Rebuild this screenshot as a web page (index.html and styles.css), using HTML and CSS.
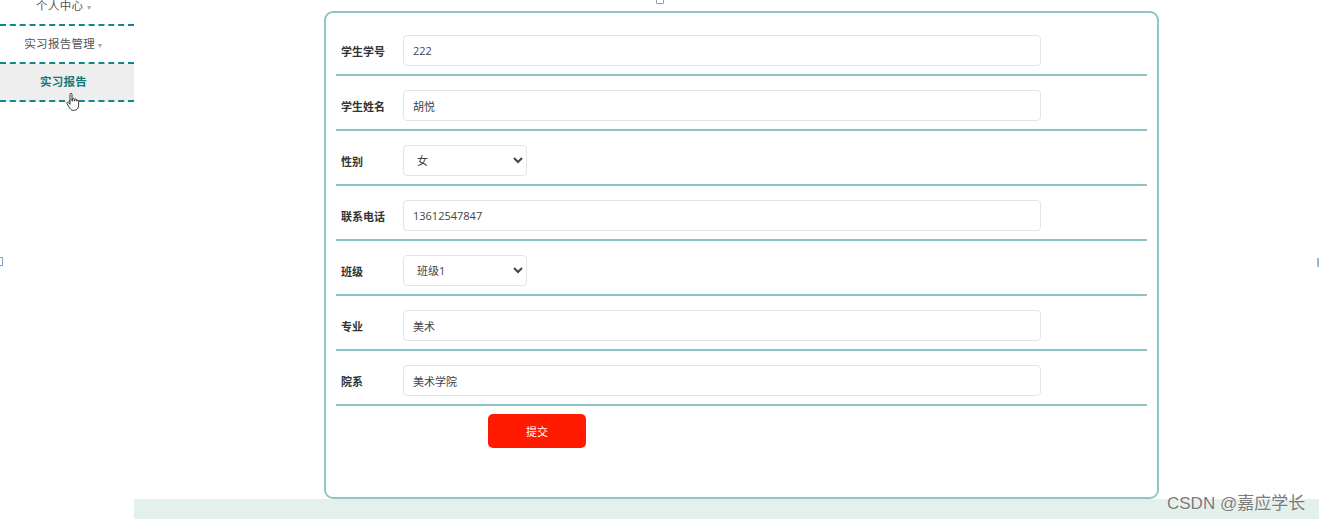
FILE: index.html
```html
<!DOCTYPE html>
<html lang="zh-CN">
<head>
<meta charset="utf-8">
<title>实习报告</title>
<link rel="stylesheet" href="styles.css">
</head>
<body>
<div class="page">
  <aside class="sidebar">
    <ul class="menu">
      <li class="menu-item">个人中心 <span class="caret">▾</span></li>
      <li class="menu-item">实习报告管理 <span class="caret">▾</span></li>
      <li class="menu-item active">实习报告</li>
    </ul>
  </aside>
  <main class="main">
    <div class="card">
      <form class="form">
        <div class="row"><label class="label">学生学号</label><input class="input" value="222"></div>
        <div class="row"><label class="label">学生姓名</label><input class="input" value="胡悦"></div>
        <div class="row"><label class="label">性别</label><select class="select"><option>女</option></select></div>
        <div class="row"><label class="label">联系电话</label><input class="input" value="13612547847"></div>
        <div class="row"><label class="label">班级</label><select class="select"><option>班级1</option></select></div>
        <div class="row"><label class="label">专业</label><input class="input" value="美术"></div>
        <div class="row"><label class="label">院系</label><input class="input" value="美术学院"></div>
        <div class="actions"><button type="button" class="btn">提交</button></div>
      </form>
    </div>
    <div class="footer-strip"></div>
  </main>
</div>
<span class="mark mark-top"></span>
<span class="mark mark-left"></span>
<span class="mark mark-right"></span>
<svg class="cursor" width="14" height="18" viewBox="0 0 14 18"><path d="M4 1.5c0-.8.5-1.2 1-1.2s1 .4 1 1.2V8h.3V6.3c0-.7.5-1 1-1s1 .3 1 1V8h.3V7c0-.7.5-1 1-1s1 .3 1 1v1.2h.2c0-.6.5-.9.9-.9.5 0 .9.3.9 1v4.2c0 2.4-1.6 4.8-4.200 4.800H7.2c-1.5 0-2.4-.7-3.3-1.9L1 10.8c-.4-.6-.3-1.2.2-1.5.5-.3 1-.1 1.4.4L4 11.3z" fill="#fff" stroke="#222" stroke-width="0.9" stroke-linejoin="round"/></svg>
<div class="watermark">CSDN @嘉应学长</div>
</body>
</html>
```

FILE: styles.css
```css
html, body {
  margin: 0;
  padding: 0;
  background: #fff;
  font-family: "Open Sans", "Noto Sans CJK SC", sans-serif;
  color: #333;
  overflow: hidden;
}
.page {
  display: flex;
  width: 1319px;
  height: 519px;
}
.sidebar {
  width: 134px;
  flex: none;
}
.menu {
  list-style: none;
  margin: -12px 0 0;
  padding: 0;
}
.menu-item {
  height: 36px;
  line-height: 36px;
  text-align: center;
  padding-right: 7px;
  font-size: 11.5px;
  letter-spacing: 0.3px;
  color: #555;
  border-bottom: 2px dashed #13878a;
}
.caret {
  font-size: 8px;
  color: #aaa;
}
.menu-item.active {
  background: #eeeeee;
  color: #137a7a;
  font-weight: bold;
}
.main {
  flex: 1;
  display: flex;
  flex-direction: column;
}
.card {
  margin: 11px 0 0 190px;
  width: 831px;
  height: 484px;
  border: 2px solid #90c6c6;
  border-radius: 9px;
  flex: none;
}
.form {
  margin: 8px 10px 0;
}
.row {
  display: flex;
  align-items: center;
  padding: 14px 0 8px;
  border-bottom: 2px solid #8dc2c2;
}
.label {
  width: 62px;
  padding-left: 5px;
  font-size: 11px;
  font-weight: bold;
  color: #333;
}
.input, .select {
  height: 31px;
  box-sizing: border-box;
  border: 1px solid #e4e4e4;
  border-radius: 4px;
  background: #fff;
  font-family: "Open Sans", "Noto Sans CJK SC", sans-serif;
  font-size: 11px;
  color: #444;
  padding: 0 9px;
  outline: none;
}
.input {
  width: 638px;
}
.select {
  width: 124px;
}
.actions {
  padding: 8px 0 0 152px;
}
.btn {
  width: 98px;
  height: 34px;
  border: none;
  border-radius: 5px;
  background: #ff1a00;
  color: #fff;
  font-family: "Open Sans", "Noto Sans CJK SC", sans-serif;
  font-size: 11px;
}
.footer-strip {
  height: 20px;
  background: #e3f0ec;
  flex: none;
}
.mark {
  position: absolute;
  box-sizing: border-box;
}
.mark-top {
  left: 656px;
  top: -3px;
  width: 8px;
  height: 7px;
  border: 1px solid #8aa0c0;
  border-radius: 1px;
}
.mark-left {
  left: -3px;
  top: 257px;
  width: 6px;
  height: 9px;
  border: 1px solid #7aa0d0;
}
.mark-right {
  left: 1317px;
  top: 258px;
  width: 2px;
  height: 9px;
  background: #9ab6da;
}
.cursor {
  position: absolute;
  left: 66px;
  top: 93px;
}
.watermark {
  position: absolute;
  left: 1167px;
  top: 489px;
  font-family: "Liberation Sans", "Noto Sans CJK SC", sans-serif;
  font-size: 17px;
  color: #7a7a7a;
  text-shadow: 0 0 2px #fff;
}
```
